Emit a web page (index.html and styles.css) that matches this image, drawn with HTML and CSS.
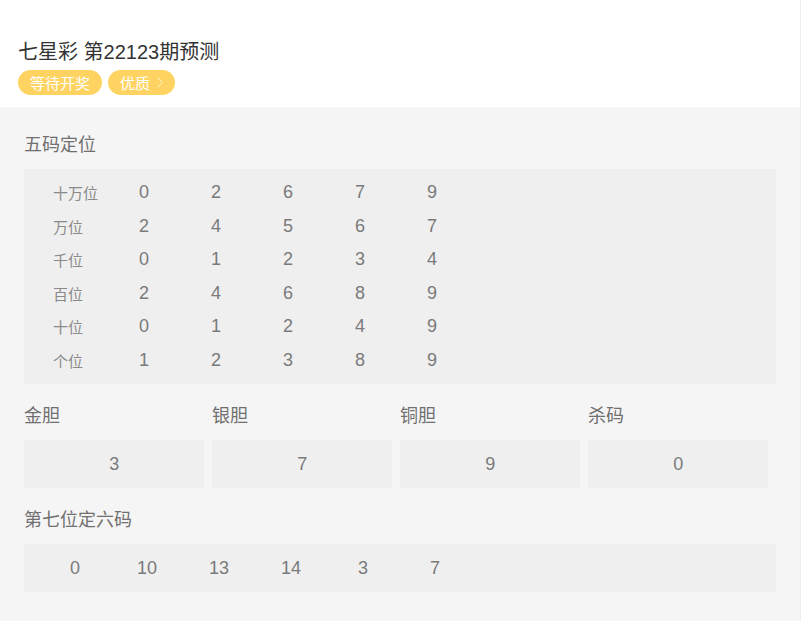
FILE: index.html
```html
<!DOCTYPE html>
<html lang="zh-CN">
<head>
  <meta charset="UTF-8">
  <title>七星彩 第22123期预测</title>
  <link rel="stylesheet" href="styles.css">
</head>
<body>

  <div class="page">
    <div class="header">
      <h1 class="title">七星彩 第22123期预测</h1>
      <div class="tags">
        <span class="tag">等待开奖</span>
        <span class="tag">优质
          <svg class="arrow" width="6" height="11" viewBox="0 0 6 11"><polyline points="0.5,0.5 5.5,5.5 0.5,10.5" fill="none" stroke="#fff1c8" stroke-width="1"/></svg>
        </span>
      </div>
    </div>

    <div class="main">
      <div class="section-title">五码定位</div>
      <div class="pos-table">
        <div class="pos-label">十万位</div><div class="num">0</div><div class="num">2</div><div class="num">6</div><div class="num">7</div><div class="num">9</div>
        <div class="pos-label">万位</div><div class="num">2</div><div class="num">4</div><div class="num">5</div><div class="num">6</div><div class="num">7</div>
        <div class="pos-label">千位</div><div class="num">0</div><div class="num">1</div><div class="num">2</div><div class="num">3</div><div class="num">4</div>
        <div class="pos-label">百位</div><div class="num">2</div><div class="num">4</div><div class="num">6</div><div class="num">8</div><div class="num">9</div>
        <div class="pos-label">十位</div><div class="num">0</div><div class="num">1</div><div class="num">2</div><div class="num">4</div><div class="num">9</div>
        <div class="pos-label">个位</div><div class="num">1</div><div class="num">2</div><div class="num">3</div><div class="num">8</div><div class="num">9</div>
      </div>

      <div class="dan-grid">
        <div class="dan">
          <div class="section-title">金胆</div>
          <div class="dan-box">3</div>
        </div>
        <div class="dan">
          <div class="section-title">银胆</div>
          <div class="dan-box">7</div>
        </div>
        <div class="dan">
          <div class="section-title">铜胆</div>
          <div class="dan-box">9</div>
        </div>
        <div class="dan">
          <div class="section-title">杀码</div>
          <div class="dan-box">0</div>
        </div>
      </div>

      <div class="section-title">第七位定六码</div>
      <div class="six-box">
        <div class="num">0</div>
        <div class="num">10</div>
        <div class="num">13</div>
        <div class="num">14</div>
        <div class="num">3</div>
        <div class="num">7</div>
      </div>
    </div>
  </div>

</body>
</html>
```

FILE: styles.css
```css
* {
  margin: 0;
  padding: 0;
  box-sizing: border-box;
}

body {
  font-family: 'Liberation Sans', Arial, 'Noto Sans CJK SC', sans-serif;
  background: #eeeeee;
  color: #666;
}

.page {
  width: 800px;
  min-height: 621px;
  background: #f5f5f5;
}

.header {
  background: #fff;
  padding: 38px 18px 12px;
}

.title {
  font-size: 20px;
  font-weight: normal;
  line-height: 28px;
  color: #333;
}

.tags {
  display: flex;
  gap: 6px;
  margin-top: 4px;
}

.tag {
  display: inline-flex;
  align-items: center;
  height: 25px;
  padding: 0 12px;
  border-radius: 13px;
  background: #ffd361;
  color: #fff;
  font-size: 15px;
}

.tag .arrow {
  margin-left: 7px;
}

.main {
  padding: 6px 24px 29px;
}

.section-title {
  font-size: 18px;
  line-height: 24px;
  color: #707070;
  padding: 20px 0 12px;
}

.pos-table {
  display: grid;
  grid-template-columns: 55px repeat(5, 72px);
  grid-auto-rows: 33.5px;
  align-items: center;
  background: #efefef;
  padding: 7px 0 7px 29px;
}

.pos-label {
  font-size: 15px;
  color: #8a8a8a;
}

.num {
  font-size: 18px;
  color: #7a7a7a;
  text-align: center;
}

.dan-grid {
  display: grid;
  grid-template-columns: repeat(4, 24%);
  column-gap: 1%;
}

.dan-box {
  height: 48px;
  background: #efefef;
  display: flex;
  align-items: center;
  justify-content: center;
  font-size: 18px;
  color: #7a7a7a;
}

.six-box {
  display: grid;
  grid-template-columns: repeat(6, 72px);
  align-items: center;
  height: 48px;
  background: #efefef;
  padding-left: 15px;
}
```
